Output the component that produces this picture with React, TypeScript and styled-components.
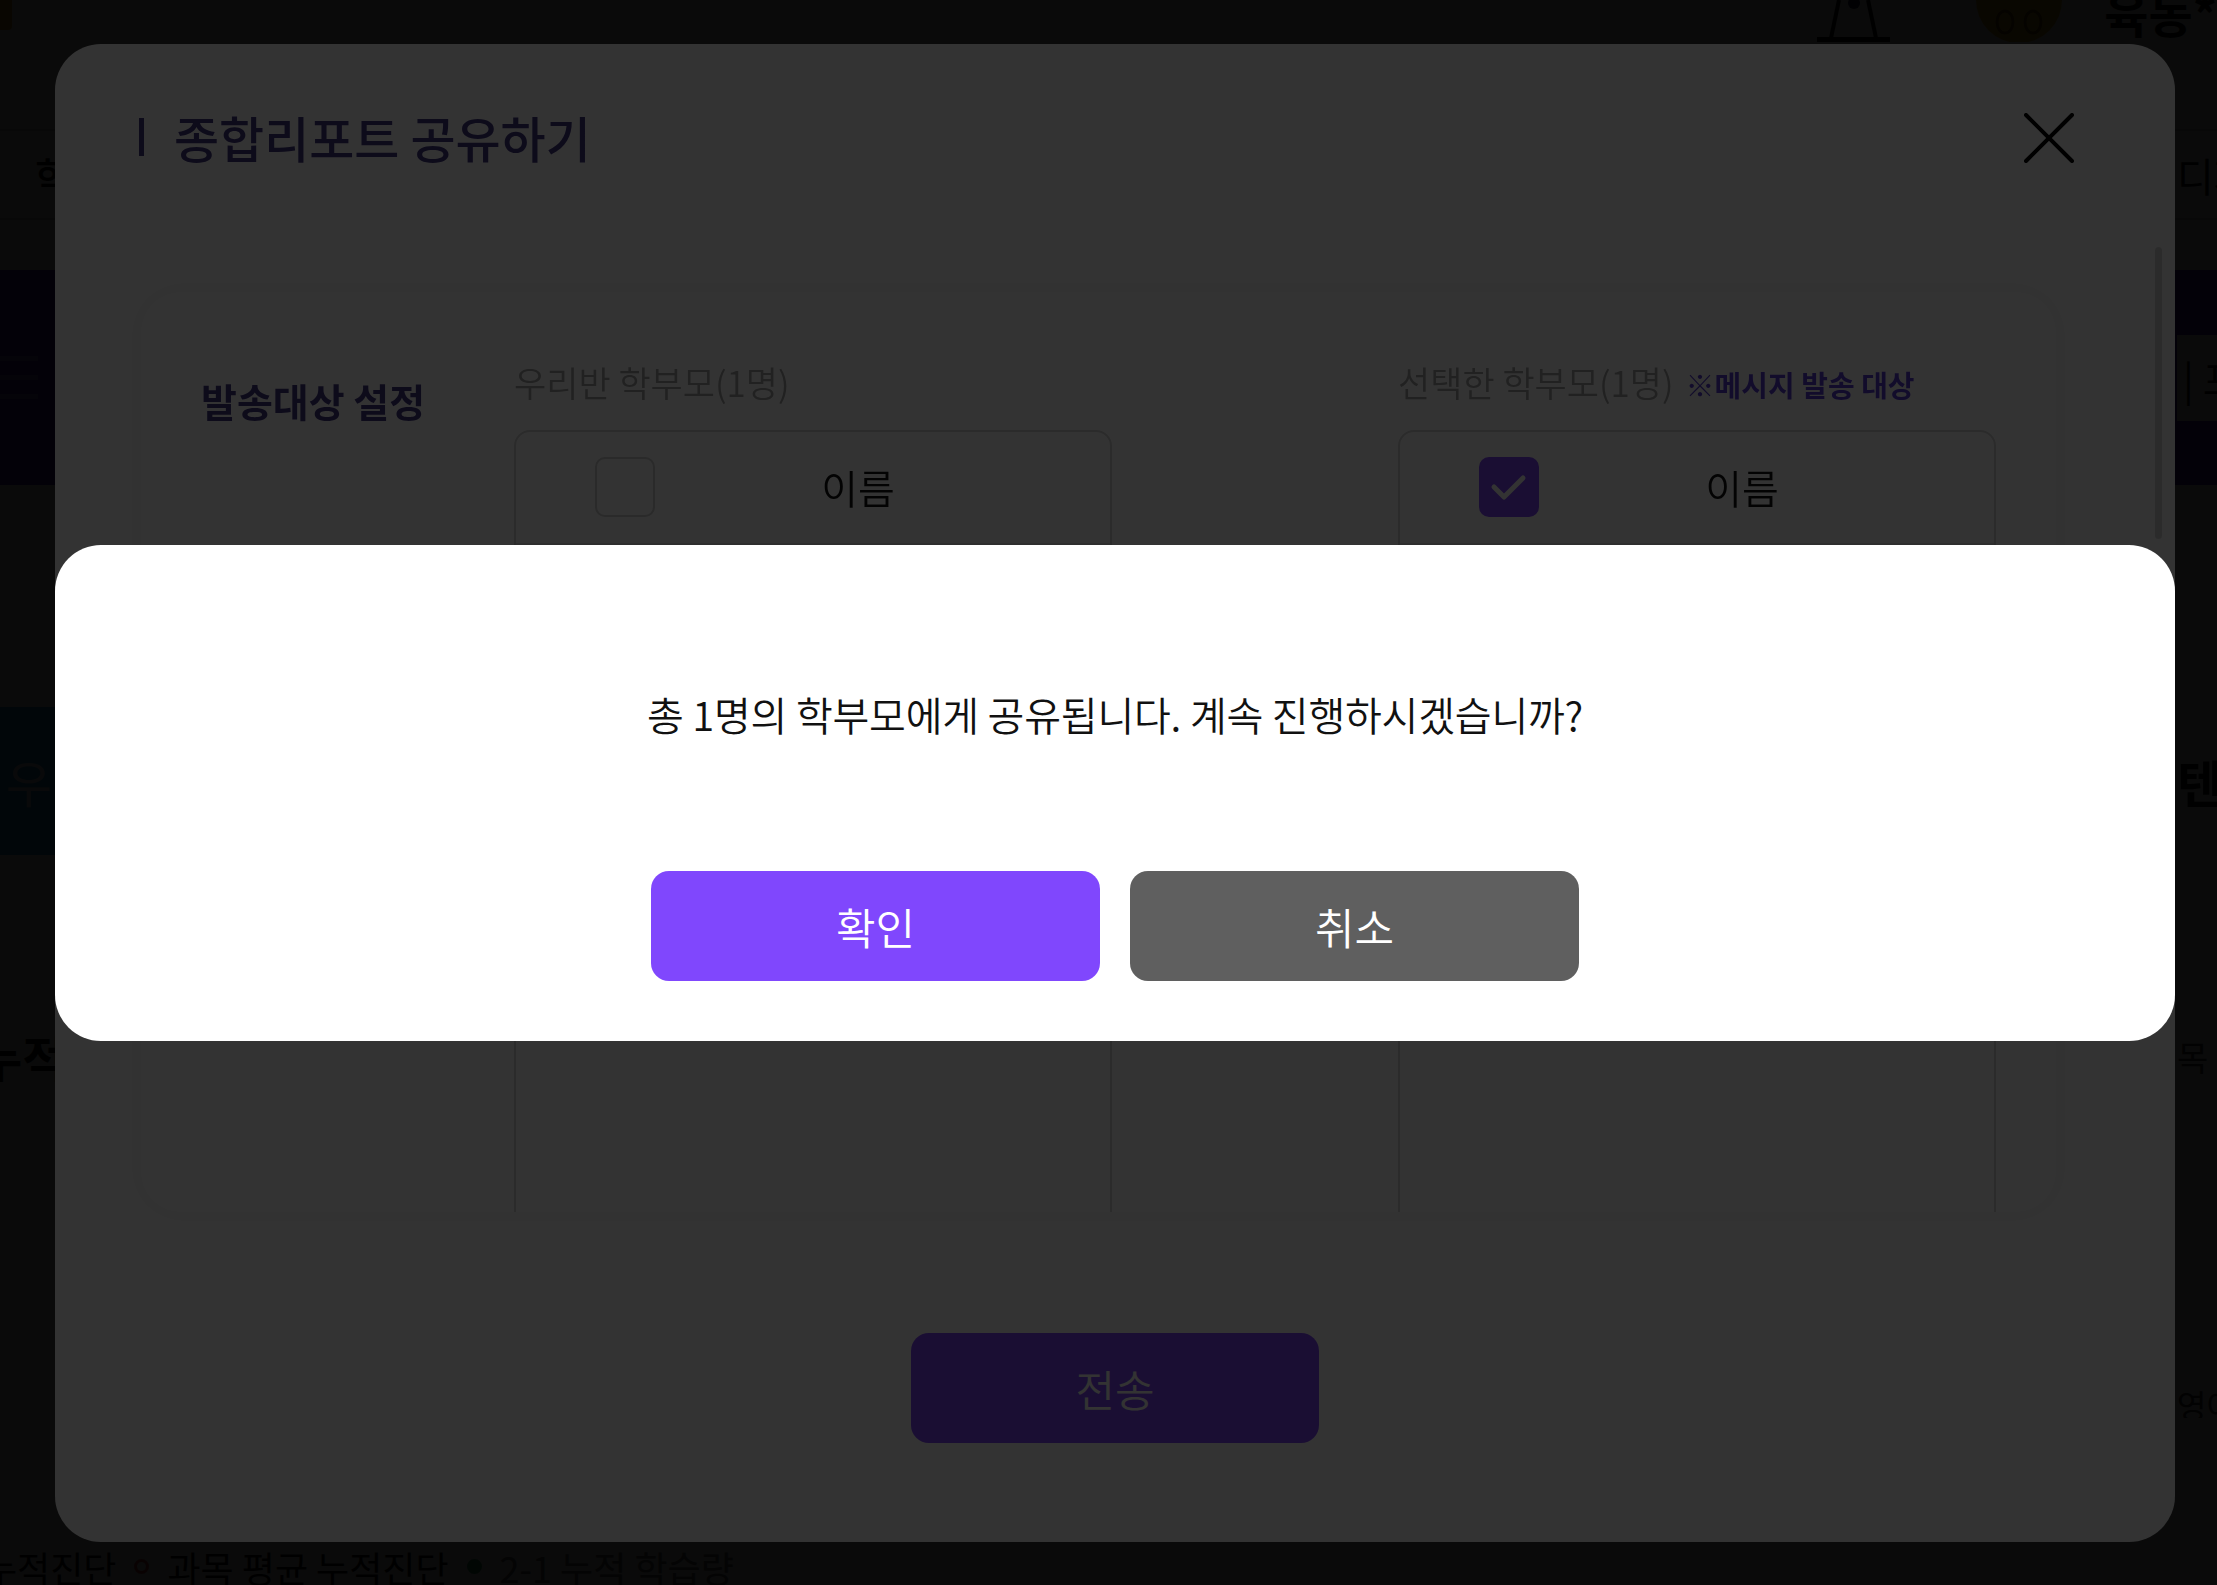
import React from "react";
import styled, { createGlobalStyle } from "styled-components";

const PURPLE = "#8047fd";
const INK = "#443a84";

const GlobalStyle = createGlobalStyle`
  *, *::before, *::after { box-sizing: border-box; }
  html, body { margin: 0; padding: 0; }
  body {
    width: 2217px;
    height: 1585px;
    overflow: hidden;
    background: #ffffff;
    font-family: "Noto Sans CJK KR", "Noto Sans", sans-serif;
    color: #111;
  }
  button { font-family: inherit; cursor: pointer; }
`;

/* ---------- page behind the modals ---------- */

const Page = styled.div`
  width: 2217px;
  height: 1585px;
  overflow: hidden;
  display: flex;
  flex-direction: column;
  background: #fff;
`;

const TopBar = styled.header`
  height: 42px;
  flex-shrink: 0;
  display: flex;
  justify-content: space-between;
  align-items: flex-start;
  overflow: hidden;
`;

const LogoMark = styled.div`
  width: 12px;
  height: 30px;
  background: #f2a81d;
  border-radius: 0 0 4px 0;
`;

const TopRight = styled.div`
  display: flex;
  align-items: flex-start;
  gap: 40px;
`;

const LampIcon = styled.svg`
  margin-right: 45px;
`;

const UserName = styled.span`
  margin-top: -12px;
  font-size: 48px;
  font-weight: 700;
  line-height: 1;
  white-space: nowrap;
`;

const BgRow = styled.div<{ $top: number; $height: number; $fill?: string; $lined?: boolean }>`
  margin-top: ${(p) => p.$top}px;
  height: ${(p) => p.$height}px;
  flex-shrink: 0;
  display: grid;
  grid-template-columns: 2177px 40px;
  align-items: center;
  background: ${(p) => p.$fill ?? "transparent"};
  border-top: ${(p) => (p.$lined ? "2px solid #dcdcdc" : "none")};
  border-bottom: ${(p) => (p.$lined ? "2px solid #dcdcdc" : "none")};
`;

const Cell = styled.div<{ $pad?: number }>`
  min-width: 0;
  height: 100%;
  overflow: hidden;
  white-space: nowrap;
  display: flex;
  align-items: center;
  padding-left: ${(p) => p.$pad ?? 0}px;
`;

const BgText = styled.span<{ $size: number; $weight?: number; $color?: string; $shift?: number }>`
  font-size: ${(p) => p.$size}px;
  font-weight: ${(p) => p.$weight ?? 400};
  color: ${(p) => p.$color ?? "#111"};
  margin-left: ${(p) => p.$shift ?? 0}px;
  white-space: nowrap;
`;

const Burger = styled.div`
  display: flex;
  flex-direction: column;
  gap: 14px;
  span {
    display: block;
    width: 38px;
    height: 5px;
    background: #8a78ee;
  }
`;

const BannerTab = styled.div`
  height: 86px;
  width: 100%;
  background: #fff;
  display: flex;
  align-items: center;
  padding-left: 6px;
  font-size: 40px;
  white-space: nowrap;
`;

const TealCard = styled.div`
  width: 720px;
  height: 100%;
  background: #2a9be8;
  display: flex;
  align-items: center;
  padding-left: 6px;
  font-size: 50px;
  color: #e9f6ff;
`;

const Legend = styled.div`
  margin-top: auto;
  height: 37px;
  flex-shrink: 0;
  display: flex;
  align-items: center;
  gap: 18px;
  overflow: hidden;
  white-space: nowrap;
`;

const LegendDot = styled.span<{ $ring?: boolean; $color: string }>`
  width: 15px;
  height: 15px;
  border-radius: 50%;
  flex-shrink: 0;
  border: 3px solid ${(p) => p.$color};
  background: ${(p) => (p.$ring ? "transparent" : p.$color)};
`;

/* ---------- overlays ---------- */

const Backdrop = styled.div`
  position: fixed;
  inset: 0;
  background: rgba(0, 0, 0, 0.8);
  display: flex;
  align-items: center;
  justify-content: center;
  padding-left: 13px;
`;

const ShareModal = styled.div`
  width: 2120px;
  height: 1498px;
  background: #fff;
  border-radius: 46px;
  display: flex;
  flex-direction: column;
  overflow: hidden;
`;

const ModalHeader = styled.div`
  height: 188px;
  flex: none;
  display: flex;
  align-items: center;
  justify-content: space-between;
  padding: 0 101px 0 84px;
`;

const TitleWrap = styled.div`
  display: flex;
  align-items: center;
  gap: 30px;
`;

const TitleBar = styled.span`
  width: 5px;
  height: 38px;
  background: ${INK};
`;

const Title = styled.h2`
  margin: 0;
  font-size: 49px;
  font-weight: 500;
  color: ${INK};
  line-height: 1.2;
`;

const CloseButton = styled.button`
  width: 50px;
  height: 50px;
  padding: 0;
  border: none;
  background: none;
  display: flex;
`;

const ScrollArea = styled.div`
  position: relative;
  height: 980px;
  flex: none;
  padding: 60px 119px 0 86px;
`;

const ScrollThumb = styled.div`
  position: absolute;
  right: 13px;
  top: 15px;
  width: 7px;
  height: 292px;
  border-radius: 4px;
  background: #d8d8d8;
`;

const Card = styled.div`
  height: 920px;
  padding: 0 60px;
  display: grid;
  grid-template-columns: 313px 598px 1fr 598px;
  background: #fff;
  border-radius: 40px;
  box-shadow: 0 0 24px rgba(0, 0, 0, 0.07);
  overflow: hidden;
`;

const SectionLabel = styled.div`
  padding-top: 84px;
  font-size: 39px;
  line-height: 48px;
  font-weight: 700;
  color: ${INK};
  white-space: nowrap;
`;

const Column = styled.div`
  display: flex;
  flex-direction: column;
  padding-top: 66px;
  min-height: 0;
`;

const ColumnHeading = styled.div`
  height: 48px;
  font-size: 35px;
  font-weight: 350;
  line-height: 48px;
  color: #a6a6a6;
  white-space: nowrap;
  margin-bottom: 24px;
`;

const Note = styled.span`
  margin-left: 12px;
  font-size: 29px;
  line-height: 1;
  font-weight: 700;
  color: #5b3fd6;
`;

const ListBox = styled.div`
  flex: 1;
  margin-bottom: -40px;
  border: 2px solid #d6d6d6;
  border-radius: 16px;
  background: #fff;
`;

const ListHead = styled.div`
  display: grid;
  grid-template-columns: 220px 244px 1fr;
  align-items: center;
  height: 113px;
  border-bottom: 2px solid #e6e6e6;
`;

const CheckCell = styled.div`
  padding-left: 79px;
  display: flex;
`;

const CheckBox = styled.span<{ $checked?: boolean }>`
  width: 60px;
  height: 60px;
  border-radius: 10px;
  display: flex;
  align-items: center;
  justify-content: center;
  border: ${(p) => (p.$checked ? "none" : "2px solid #cfcfcf")};
  background: ${(p) => (p.$checked ? PURPLE : "#fff")};
`;

const HeadName = styled.span`
  text-align: center;
  font-size: 40px;
  font-weight: 350;
  line-height: 1.2;
  color: #111;
`;

const ModalFooter = styled.div`
  flex: none;
  display: flex;
  justify-content: center;
  padding: 121px 0 99px;
`;

const SendButton = styled.button`
  width: 408px;
  height: 110px;
  border: none;
  border-radius: 18px;
  background: ${PURPLE};
  color: #fff;
  font-size: 43px;
  font-weight: 350;
`;

const ConfirmDialog = styled.div`
  width: 2120px;
  height: 496px;
  border-radius: 46px;
  background: #fff;
  display: flex;
  flex-direction: column;
  align-items: center;
  padding: 145px 0 60px;
`;

const Message = styled.p`
  margin: 0;
  font-size: 40px;
  font-weight: 350;
  line-height: 48px;
  letter-spacing: -0.2px;
  color: #111;
`;

const Actions = styled.div`
  margin-top: auto;
  display: flex;
  gap: 30px;
`;

const ActionButton = styled.button<{ $tone: "primary" | "muted" }>`
  width: 449px;
  height: 110px;
  border: none;
  border-radius: 18px;
  background: ${(p) => (p.$tone === "primary" ? PURPLE : "#5f5f5f")};
  color: #fff;
  font-size: 43px;
  font-weight: 350;
`;

const Check = () => (
  <svg width="60" height="60" viewBox="0 0 60 60">
    <path d="M15 30 L25 40 L44 21" fill="none" stroke="#fff" strokeWidth="5" strokeLinecap="round" strokeLinejoin="round" />
  </svg>
);

function Background() {
  return (
    <Page>
      <TopBar>
        <LogoMark />
        <TopRight>
          <LampIcon width="73" height="42" viewBox="0 0 73 42">
            <path d="M22 0 L14 38 M51 0 L59 38" stroke="#111" strokeWidth="4" />
            <rect x="0" y="37" width="73" height="5" fill="#111" />
            <circle cx="37" cy="3" r="6" fill="#1c2360" />
          </LampIcon>
          <svg width="89" height="42" viewBox="0 0 89 42">
            <circle cx="44" cy="0" r="43" fill="#f4c020" />
            <ellipse cx="30" cy="22" rx="8" ry="11" fill="none" stroke="#8a5a10" strokeWidth="3" />
            <ellipse cx="58" cy="22" rx="8" ry="11" fill="none" stroke="#8a5a10" strokeWidth="3" />
          </svg>
          <UserName>육동*</UserName>
        </TopRight>
      </TopBar>

      <BgRow $top={87} $height={91} $lined>
        <Cell $pad={35}>
          <BgText $size={40} $weight={500}>학급 관리</BgText>
        </Cell>
        <Cell>
          <BgText $size={40}>디자인</BgText>
        </Cell>
      </BgRow>

      <BgRow $top={50} $height={215} $fill="#4b2fd0">
        <Cell>
          <Burger>
            <span />
            <span />
            <span />
          </Burger>
        </Cell>
        <Cell>
          <BannerTab>| 포인트</BannerTab>
        </Cell>
      </BgRow>

      <BgRow $top={222} $height={148}>
        <Cell>
          <TealCard>우리반</TealCard>
        </Cell>
        <Cell>
          <BgText $size={50} $weight={700}>텐</BgText>
        </Cell>
      </BgRow>

      <BgRow $top={175} $height={52}>
        <Cell>
          <BgText $size={48} $weight={700} $shift={-22}>누적 진단</BgText>
        </Cell>
        <Cell>
          <BgText $size={34} $color="#444">목 평균</BgText>
        </Cell>
      </BgRow>

      <BgRow $top={308} $height={28}>
        <Cell />
        <Cell>
          <BgText $size={32} $color="#333">영어</BgText>
        </Cell>
      </BgRow>

      <Legend>
        <BgText $size={36} $shift={-16}>누적진단</BgText>
        <LegendDot $ring $color="#e04848" />
        <BgText $size={36}>과목 평균 누적진단</BgText>
        <LegendDot $color="#1fa060" />
        <BgText $size={36} $color="#666">2-1 누적 학습량</BgText>
      </Legend>
    </Page>
  );
}

export default function App() {
  return (
    <>
      <GlobalStyle />
      <Background />

      <Backdrop>
        <ShareModal>
          <ModalHeader>
            <TitleWrap>
              <TitleBar />
              <Title>종합리포트 공유하기</Title>
            </TitleWrap>
            <CloseButton aria-label="닫기">
              <svg width="50" height="50" viewBox="0 0 50 50">
                <path d="M2 2 L48 48 M48 2 L2 48" stroke="#000" strokeWidth="4" strokeLinecap="round" />
              </svg>
            </CloseButton>
          </ModalHeader>

          <ScrollArea>
            <ScrollThumb />
            <Card>
              <SectionLabel>발송대상 설정</SectionLabel>
              <Column>
                <ColumnHeading>우리반 학부모(1명)</ColumnHeading>
                <ListBox>
                  <ListHead>
                    <CheckCell>
                      <CheckBox />
                    </CheckCell>
                    <HeadName>이름</HeadName>
                  </ListHead>
                </ListBox>
              </Column>
              <div />
              <Column>
                <ColumnHeading>
                  선택한 학부모(1명)<Note>※메시지 발송 대상</Note>
                </ColumnHeading>
                <ListBox>
                  <ListHead>
                    <CheckCell>
                      <CheckBox $checked>
                        <Check />
                      </CheckBox>
                    </CheckCell>
                    <HeadName>이름</HeadName>
                  </ListHead>
                </ListBox>
              </Column>
            </Card>
          </ScrollArea>

          <ModalFooter>
            <SendButton>전송</SendButton>
          </ModalFooter>
        </ShareModal>
      </Backdrop>

      <Backdrop>
        <ConfirmDialog>
          <Message>총 1명의 학부모에게 공유됩니다. 계속 진행하시겠습니까?</Message>
          <Actions>
            <ActionButton $tone="primary">확인</ActionButton>
            <ActionButton $tone="muted">취소</ActionButton>
          </Actions>
        </ConfirmDialog>
      </Backdrop>
    </>
  );
}
